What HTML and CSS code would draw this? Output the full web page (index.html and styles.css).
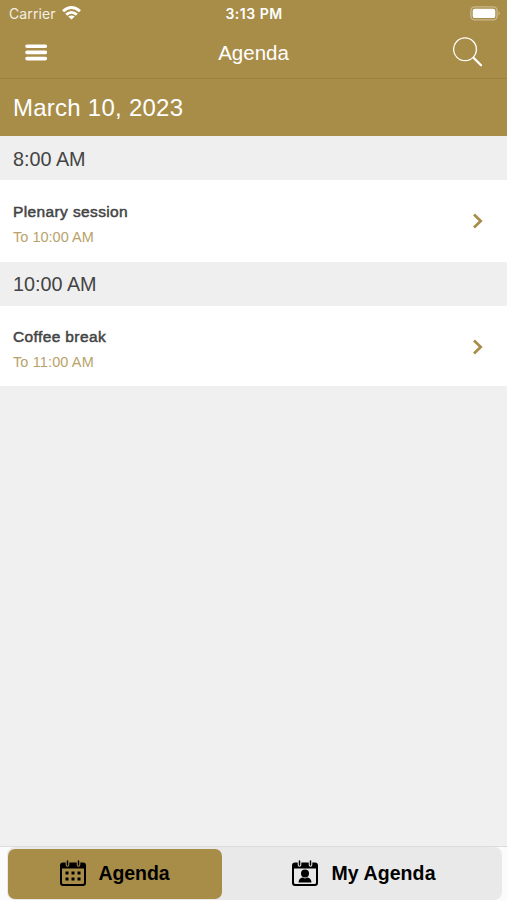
FILE: index.html
```html
<!DOCTYPE html>
<html lang="en">
<head>
<meta charset="utf-8">
<title>Agenda</title>
<link rel="stylesheet" href="styles.css">
</head>
<body>
<div class="screen">
  <header class="top">
    <div class="status">
      <div class="carrier"><span>Carrier</span>
        <svg width="19" height="14" viewBox="0 0 18 14" preserveAspectRatio="none" fill="none" stroke="#fff" stroke-width="2.8"><path d="M1 5.200Q9-2.200 17 5.200M4 8.600Q9 4.100 14 8.600"/><path d="M9 13.600 5.900 10.600Q9 8.200 12.100 10.600Z" fill="#fff" stroke="none"/></svg>
      </div>
      <time class="clock">3:13 PM</time>
      <svg class="battery" width="31" height="15" viewBox="0 0 31 15"><rect x=".9" y=".9" width="26.200" height="13" rx="4" fill="none" stroke="#cbb98c" stroke-width="1.400"/><rect x="2.700" y="2.700" width="22.600" height="9.400" rx="2.200" fill="#fff"/><path d="M28.600 5q2.400 2.300 0 4.600Z" fill="#cbb98c"/></svg>
    </div>
    <nav class="nav">
      <svg width="22" height="17" viewBox="0 0 22 17" stroke="#fff" stroke-width="3.600" stroke-linecap="round"><path d="M2 2.200h18.300M2 8.400h18.300M2 14.600h18.300"/></svg>
      <h1>Agenda</h1>
      <svg width="30" height="30" viewBox="0 0 30 30" fill="none" stroke="#fff"><circle cx="12" cy="12.300" r="11.400" stroke-width="1.300"/><path d="m20 20.300 1.400 1.400" stroke-width="1.300"/><path d="m21 21.300 7 7" stroke-width="2.300" stroke-linecap="round"/></svg>
    </nav>
  </header>
  <h2 class="date">March 10, 2023</h2>
  <main>
    <h3 class="hour">8:00 AM</h3>
    <article class="item first">
      <div class="text"><h4>Plenary session</h4><p>To 10:00 AM</p></div>
      <svg width="12" height="16" viewBox="0 0 12 16" fill="none" stroke="#a88d49" stroke-width="2.700"><path d="m2 1.500 6.700 6.500L2 14.500"/></svg>
    </article>
    <h3 class="hour second">10:00 AM</h3>
    <article class="item">
      <div class="text"><h4>Coffee break</h4><p class="late">To 11:00 AM</p></div>
      <svg width="12" height="16" viewBox="0 0 12 16" fill="none" stroke="#a88d49" stroke-width="2.700"><path d="m2 1.500 6.700 6.500L2 14.500"/></svg>
    </article>
  </main>
  <footer class="tabs">
    <div class="segments">
      <div class="tab active">
        <svg width="28" height="27" viewBox="0 0 28 27"><path fill-rule="evenodd" d="M4 2.500h20q3 0 3 3V23q0 3-3 3H4q-3 0-3-3V5.500q0-3 3-3ZM3 8.500v14q0 1.500 1.500 1.500h19q1.500 0 1.500-1.500v-14Z"/><g class="rings"><path d="M8.500 1v4M19.500 1v4"/></g><path d="M8.500 1v4M19.500 1v4" stroke="#000" stroke-width="1.500" stroke-linecap="round"/><path d="M6.500 11.500h3v3h-3zM12.500 11.500h3v3h-3zM18.500 11.500h3v3h-3zM6.500 17.500h3v3h-3zM12.500 17.500h3v3h-3zM18.500 17.500h3v3h-3z"/></svg>
        <span>Agenda</span>
      </div>
      <div class="tab mine">
        <svg width="28" height="27" viewBox="0 0 28 27"><path fill-rule="evenodd" d="M4 2.500h20q3 0 3 3V23q0 3-3 3H4q-3 0-3-3V5.500q0-3 3-3ZM3 8.500v14q0 1.500 1.500 1.500h19q1.500 0 1.500-1.500v-14Z"/><g class="rings"><path d="M8.500 1v4M19.500 1v4"/></g><path d="M8.500 1v4M19.500 1v4" stroke="#000" stroke-width="1.500" stroke-linecap="round"/><circle cx="14" cy="13.500" r="4"/><path d="M7.500 22.500q.3-4.500 4.200-5.100L14 18.600l2.300-1.200q3.900.6 4.200 5.100Z"/></svg>
        <span>My Agenda</span>
      </div>
    </div>
  </footer>
</div>
</body>
</html>
```

FILE: styles.css
```css
* { box-sizing: border-box; margin: 0; }
body { font-family: "Liberation Sans", Arial, sans-serif; }
svg { display: block; flex: none; }
.screen { height: 900px; display: flex; flex-direction: column; background: #f0f0f0; overflow: hidden; }
.top { height: 79px; background: #a88d49; border-bottom: 1px solid #9d823f; color: #fff; }
.status { height: 27px; display: grid; grid-template-columns: 1fr auto 1fr; align-items: center; padding: 0 6px 0 9px; font-family: Inter, sans-serif; font-size: 14px; }
.carrier { display: flex; align-items: center; gap: 6px; color: #f4efe3; letter-spacing: .1px; }
.carrier svg { margin-top: -1px; }
.clock { font-weight: 600; font-size: 14px; letter-spacing: .5px; margin-right: 2px; }
.battery { justify-self: end; }
.nav { height: 51px; display: grid; grid-template-columns: 1fr auto 1fr; align-items: center; padding: 0 24px 0 25px; }
.nav h1 { font-size: 20.5px; font-weight: 400; margin-right: 1px; }
.nav svg:last-child { justify-self: end; margin-top: -1px; }
.date { height: 57px; padding: 1px 13px 0; background: #a88d49; color: #fff; font-size: 24px; font-weight: 400; line-height: 55px; letter-spacing: .25px; }
.hour { height: 44px; padding: 0 13px; background: #efefef; color: #444; font-size: 19.8px; font-weight: 400; line-height: 46px; }
.hour.second { line-height: 44px; }
.item { height: 80px; padding: 1px 23px 0 13px; background: #fff; display: flex; align-items: center; justify-content: space-between; }
.item.first { height: 82px; padding-top: 0; }
.text { padding-top: 6px; }
.item h4 { color: #444; font-size: 15.5px; font-weight: 400; line-height: 22px; letter-spacing: .38px; -webkit-text-stroke: .5px #444; }
.item p { margin-top: 3px; color: #b8a26a; font-size: 14.5px; line-height: 22px; letter-spacing: .02px; }
.item .late { letter-spacing: .12px; }
.tabs { height: 54px; margin-top: auto; padding: 0 5px 0 7px; background: #fbfbfb; border-top: 1px solid #dcdcdc; }
.segments { height: 53px; display: flex; background: #e9e9e9; border-radius: 8px; }
.tab { flex: 1; display: flex; align-items: center; justify-content: center; gap: 11px; color: #000; font-size: 19.5px; font-weight: 700; letter-spacing: .1px; }
.tab.active { flex: 0 0 214px; height: 50px; margin: 2px 0 0 1px; padding: 0 1px 1px 0; background: #a88d49; border-radius: 7px; letter-spacing: -.05px; }
.mine { gap: 12px; padding-left: 3px; }
.rings { fill: none; stroke: #e9e9e9; stroke-width: 3.6; stroke-linecap: round; }
.active .rings { stroke: #a88d49; }
```
